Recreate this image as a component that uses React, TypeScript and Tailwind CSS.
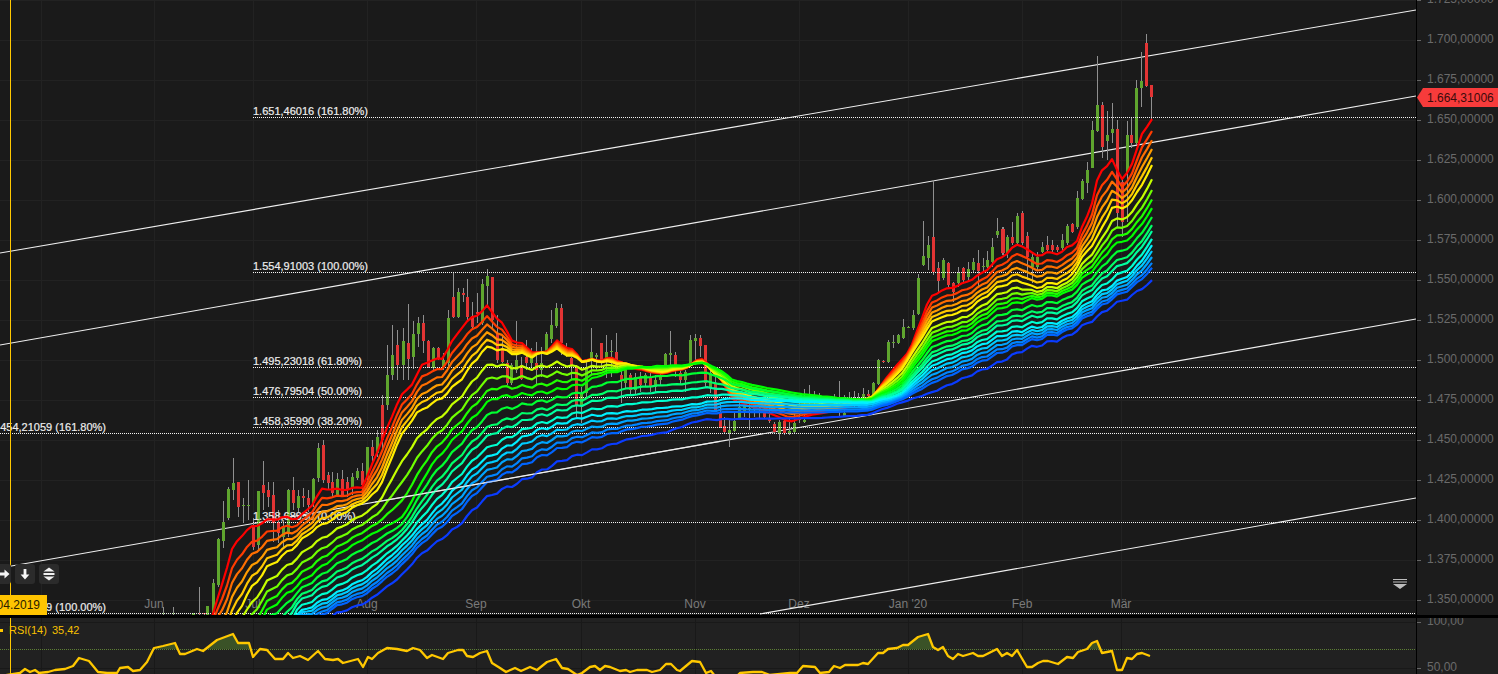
type Pt = number[];
type Candle = [number, number, number, number, number, string];

const CHART_W = 1416;

// ribbon colours, fast ema (red) to slow ema (blue)
const ribbonColors = [
  "#ff0000", "#ff3c00", "#ff6e00", "#ff9c00", "#ffc800", "#ffee00",
  "#c4ff00", "#70ff00", "#20ff00", "#00ff00", "#00ff30", "#00ff68",
  "#00ffa0", "#00ffd0", "#00f0ff", "#00ccff", "#00a4ff", "#0084ff", "#0064ff", "#0a3cff",
];

const redGuide: Pt[] = [[205,640],[213,614],[233,547],[243,533],[260,523],[277,518],[300,518],[313,503],[323,488],[340,490],[363,487],[378,450],[400,397],[413,383],[423,363],[442,358],[463,325],[487,307],[500,320],[510,338],[540,355],[557,342],[570,348],[582,360],[600,360],[613,358],[633,368],[660,374],[687,368],[700,357],[717,373],[733,400],[767,412],[790,422],[810,415],[840,410],[872,398],[887,377],[910,350],[920,323],[930,297],[943,290],[960,285],[980,275],[1000,258],[1020,243],[1033,255],[1063,252],[1077,240],[1090,210],[1098,177],[1113,157],[1120,182],[1133,163],[1142,133],[1152,120]];
const yellowGuide: Pt[] = [[225,640],[237,613],[250,590],[267,568],[293,548],[313,530],[340,515],[367,500],[380,487],[400,437],[417,413],[433,403],[443,397],[463,377],[483,350],[490,347],[513,353],[533,356],[557,350],[583,361],[600,361],[633,365],[660,372],[690,366],[700,360],[733,390],[757,398],[800,407],[840,405],[870,398],[900,372],[933,320],[967,310],[1000,286],[1020,280],[1033,288],[1067,280],[1100,233],[1113,205],[1120,210],[1133,200],[1152,166]];
const greenGuide: Pt[] = [[250,640],[265,613],[300,583],[340,553],[367,537],[403,517],[430,467],[453,440],[480,410],[493,398],[547,392],[583,384],[600,375],[633,368],[660,366],[690,365],[700,362],[717,368],[733,380],[757,386],[800,394],[840,398],[870,400],[900,385],[933,340],[967,330],[1000,308],[1020,302],[1067,293],[1100,263],[1113,245],[1120,243],[1133,236],[1152,209]];
const cyanGuide: Pt[] = [[285,640],[297,614],[367,577],[400,548],[480,462],[533,432],[583,417],[633,411],[690,405],[733,398],[757,400],[800,402],[870,403],[900,396],[933,365],[967,352],[1000,336],[1020,331],[1067,320],[1100,293],[1120,280],[1133,272],[1152,246]];
const blueGuide: Pt[] = [[320,625],[333,615],[367,602],[400,577],[420,555],[457,527],[483,500],[497,492],[520,482],[547,468],[563,460],[600,448],[633,438],[667,432],[700,420],[733,419],[820,418],[867,415],[900,403],[933,392],[1000,362],[1023,350],[1067,337],[1077,330],[1100,315],[1113,305],[1130,297],[1152,281]];

// which guides a line sits between, and how far along
const lineSlots: [Pt[], Pt[], number][] = [
  [redGuide, yellowGuide, 0], [redGuide, yellowGuide, 0.26], [redGuide, yellowGuide, 0.46],
  [redGuide, yellowGuide, 0.65], [redGuide, yellowGuide, 0.83], [redGuide, yellowGuide, 1],
  [yellowGuide, greenGuide, 0.33], [yellowGuide, greenGuide, 0.58], [yellowGuide, greenGuide, 0.8],
  [yellowGuide, greenGuide, 1], [greenGuide, cyanGuide, 0.24], [greenGuide, cyanGuide, 0.46],
  [greenGuide, cyanGuide, 0.62], [greenGuide, cyanGuide, 0.83], [greenGuide, cyanGuide, 1],
  [cyanGuide, blueGuide, 0.17], [cyanGuide, blueGuide, 0.34], [cyanGuide, blueGuide, 0.51],
  [cyanGuide, blueGuide, 0.65], [cyanGuide, blueGuide, 1],
];

function at(guide: Pt[], x: number) {
  if (x <= guide[0][0]) return guide[0][1];
  for (let i = 1; i < guide.length; i++) {
    if (x <= guide[i][0]) {
      const [x0, y0] = guide[i - 1];
      const [x1, y1] = guide[i];
      return y0 + ((y1 - y0) * (x - x0)) / (x1 - x0);
    }
  }
  return guide[guide.length - 1][1];
}

function ribbonLine(slot: [Pt[], Pt[], number]) {
  const [a, b, t] = slot;
  const pts: string[] = [];
  for (let x = 207; x <= 1152; x += 5) {
    const ya = at(a, x);
    const yb = at(b, x);
    const spread = Math.min(Math.abs(at(blueGuide, x) - at(redGuide, x)) / 90, 1);
    const wiggle = (Math.sin(x * 0.37) + 0.6 * Math.sin(x * 0.91 + 1)) * 1.1 * spread;
    pts.push(`${x},${(ya + (yb - ya) * t + wiggle).toFixed(1)}`);
  }
  return pts.join(" ");
}

// candles read off the picture: [x, high, top, bottom, low, colour]
const g = "g";
const r = "r";
const shift = (ox: number, oy: number, rows: Candle[]): Candle[] =>
  rows.map(([x, h, t, b, l, c]) => [ox + x / 3, oy + h / 3, oy + t / 3, oy + b / 3, oy + l / 3, c]);

const candles: Candle[] = [
  ...shift(0, 480, [
    [490,380,398,400,405,g],[520,380,398,400,405,g],[580,398,400,405,405,g],[598,322,400,403,405,r],[612,398,400,403,405,r],[622,378,378,405,405,g],[640,297,310,405,405,g],
  ]),
  ...shift(200, 440, [
    [55,295,297,435,440,g],[70,182,245,302,325,g],[85,140,148,235,240,g],[100,55,128,150,180,g],[115,125,125,200,230,r],[130,175,194,197,250,g],[145,120,194,197,240,g],[160,235,260,320,330,r],[175,152,152,315,330,g],[190,62,135,160,210,r],[205,125,150,172,200,r],[220,125,165,250,305,r],[235,210,245,280,310,r],[250,240,260,290,320,g],[265,148,150,280,290,g],[280,112,150,190,210,r],[295,150,168,205,215,g],[310,145,168,175,200,r],[325,150,175,195,215,r],[340,115,118,190,200,g],[355,10,25,115,125,g],[370,0,15,120,130,r],[385,97,105,130,150,r],[397,95,125,160,175,r],[412,100,118,165,170,g],[427,90,118,165,170,r],[442,110,125,150,170,r],[457,100,110,140,165,g],[472,85,93,113,120,g],[487,70,93,135,150,r],[502,22,22,115,120,g],[517,0,22,47,70,r],[532,-30,-10,40,50,g],
  ]),
  [382,395,405,440,450,r],[387,345,375,405,410,g],[392,325,355,375,380,g],[397,330,345,365,380,r],
  ...shift(400, 260, [
    [8,205,243,315,360,g],[23,132,250,297,360,r],[38,183,222,292,327,g],[53,170,190,222,260,g],[68,165,190,242,280,r],[83,240,243,320,325,r],[98,260,265,325,330,g],[113,262,265,295,300,r],[128,280,300,320,330,g],[143,150,175,310,320,g],[158,35,112,170,175,r],[173,85,97,172,175,g],[188,85,100,106,125,r],[200,57,112,170,185,r],[215,125,168,200,205,r],[230,100,155,161,190,r],[245,58,72,190,195,g],[260,28,48,77,140,g],[275,50,52,180,210,r],[290,165,220,300,310,r],[305,225,265,305,310,r],[320,300,310,370,375,r],[334,310,315,370,375,g],[349,183,300,330,340,g],[364,290,315,358,360,r],[379,240,290,310,330,r],[394,265,290,310,320,g],[409,245,310,330,375,r],[424,260,310,330,352,g],[439,215,222,280,285,g],[454,150,195,237,250,g],[469,128,145,197,205,g],[484,132,145,250,285,r],[499,250,265,285,290,g],[514,290,295,315,360,r],[529,315,320,435,470,r],[544,380,400,435,490,g],[559,300,320,400,410,g],[574,205,277,300,345,g],[588,280,285,290,330,g],[602,250,250,300,320,r],[617,225,275,300,355,g],[632,240,274,277,350,g],[647,218,275,335,340,r],[662,330,345,360,430,r],[676,320,330,370,385,g],[691,340,345,390,405,r],[706,340,352,390,405,g],[720,335,350,375,395,r],[735,340,345,370,380,g],[750,320,350,380,395,r],[765,345,360,380,395,g],[781,340,350,360,375,g],[796,280,282,320,325,g],[811,213,280,285,325,g],[826,275,285,320,350,r],[841,330,340,360,375,r],[856,330,335,360,395,g],[871,225,240,310,320,g],[886,222,235,243,310,g],[901,225,235,257,290,r],[916,255,255,370,385,r],[931,320,340,385,400,g],[946,340,370,450,455,r],[961,430,455,500,505,r],[973,470,497,515,520,r],[988,480,510,518,560,g],[1003,460,482,512,515,g],[1018,430,440,475,480,g],[1033,420,435,460,470,g],[1048,430,445,450,510,g],[1063,420,435,450,470,g],[1078,435,445,450,475,r],[1093,440,450,470,475,r],[1108,440,478,483,490,r],[1123,485,492,515,520,r],[1138,480,487,520,540,g],[1153,478,483,520,525,r],[1168,470,512,520,525,g],[1183,460,488,515,520,g],[1198,420,470,480,490,g],[1213,390,480,487,490,g],
  ]),
  ...shift(800, 180, [
    [13,628,660,665,680,g],[28,615,660,665,680,g],[43,632,660,665,680,r],[58,640,660,665,680,g],[103,642,660,665,680,g],[118,603,660,665,710,g],[133,645,700,710,712,g],[148,635,660,665,680,r],[163,632,660,665,680,g],[175,640,660,665,680,r],[190,625,642,655,660,g],[205,630,643,648,655,r],
    [220,605,608,645,655,g],[235,537,540,612,615,g],[250,540,542,545,548,r],[265,480,485,545,548,g],[280,465,485,488,505,g],[295,462,465,488,492,g],[310,418,440,473,476,g],[325,438,440,442,445,g],[340,390,405,445,450,g],[355,283,295,402,405,g],[370,124,228,255,258,g],[385,168,195,235,270,g],[400,0,172,275,285,r],[415,245,265,303,335,r],[430,235,240,295,300,g],[445,245,250,315,320,r],[460,305,310,335,365,r],[475,262,278,310,320,g],[490,260,265,300,305,r],[505,245,268,292,300,g],[520,235,245,270,275,g],[535,210,250,272,320,r],[550,235,258,262,280,g],[562,213,240,262,265,g],[577,175,202,245,260,g],[592,115,153,165,175,g],[607,142,147,220,225,r],[622,165,170,220,235,g],[637,127,170,190,195,r],[652,100,107,190,195,g],[667,95,100,190,195,r],[682,155,168,210,300,r],
  ]),
  ...shift(1000, 0, [
    [8,680,688,760,770,r],[22,705,710,760,770,g],[37,665,712,730,735,r],[52,645,647,730,735,g],[67,632,640,725,730,r],[82,695,708,770,830,r],[97,760,770,800,850,g],[112,755,770,800,810,g],[127,725,740,755,760,g],[142,707,735,750,760,r],[157,720,735,750,760,r],[172,735,742,750,755,r],[187,702,720,745,750,g],[202,672,677,730,735,g],[217,670,673,695,700,r],[232,572,595,682,688,g],[247,537,543,597,600,g],[262,487,510,548,578,g],[277,362,390,503,505,g],[292,168,316,392,395,g],[307,305,316,440,475,r],[322,333,405,422,480,g],[337,310,388,398,430,g],[350,360,388,640,680,r],[365,530,545,665,710,r],[380,363,405,515,665,g],[394,350,405,430,445,r],[409,240,265,430,435,g],[424,157,243,265,322,g],[439,102,130,257,260,r],[454,255,255,290,360,r],
  ]),
];

const rsiPoints: Pt[] = [[0,676],[20,673],[25,669],[30,672],[35,670],[39,673],[48,672],[55,670],[65,669],[73,666],[79,658],[89,661],[98,672],[107,673],[117,673],[120,668],[128,667],[133,671],[140,670],[147,662],[154,648],[163,646],[175,643],[180,654],[185,654],[197,649],[203,651],[217,640],[233,634],[238,643],[249,643],[253,657],[260,649],[267,650],[275,659],[283,659],[288,653],[293,658],[300,656],[308,660],[318,651],[325,659],[333,660],[338,659],[343,663],[358,659],[363,667],[368,657],[372,659],[378,653],[387,648],[397,649],[407,651],[413,648],[420,650],[427,658],[432,655],[443,659],[448,653],[458,650],[463,650],[467,656],[473,657],[480,653],[487,651],[492,663],[500,668],[506,672],[515,668],[521,671],[530,667],[537,670],[547,662],[556,659],[562,668],[568,669],[577,675],[582,673],[590,667],[595,666],[600,670],[605,666],[610,667],[620,671],[626,670],[630,672],[637,670],[647,670],[652,672],[660,670],[666,664],[671,664],[677,670],[680,671],[692,661],[700,662],[706,673],[711,671],[715,676],[737,676],[740,673],[753,672],[762,672],[770,675],[790,673],[797,673],[803,666],[815,667],[820,673],[829,672],[834,666],[840,668],[845,665],[858,665],[863,663],[868,664],[878,653],[883,653],[888,649],[897,648],[903,645],[908,645],[918,637],[928,634],[933,647],[938,650],[943,647],[948,656],[953,659],[958,654],[963,656],[973,653],[978,656],[983,656],[997,649],[1002,656],[1007,653],[1012,656],[1017,650],[1027,667],[1032,667],[1038,663],[1043,661],[1048,661],[1058,664],[1067,657],[1073,658],[1078,652],[1087,649],[1092,643],[1097,641],[1102,653],[1112,651],[1117,670],[1122,670],[1127,658],[1132,659],[1137,654],[1142,653],[1150,656]];

const rsiPath = rsiPoints.map(([x, y]) => `${x},${y - 618}`).join(" ");

const priceTicks = ["1.725,00000", "1.700,00000", "1.675,00000", "1.650,00000", "1.625,00000", "1.600,00000", "1.575,00000", "1.550,00000", "1.525,00000", "1.500,00000", "1.475,00000", "1.450,00000", "1.425,00000", "1.400,00000", "1.375,00000", "1.350,00000"];
const tickY = (i: number) => Math.round(-0.5 + i * 40.04);

const months: [string, number][] = [["Jun", 154], ["Jul", 253], ["Aug", 367], ["Sep", 476], ["Okt", 581], ["Nov", 695], ["Dez", 799], ["Jan '20", 908], ["Feb", 1022], ["Mär", 1121]];
const gridX = [41, 154, 253, 367, 476, 581, 695, 799, 908, 1022, 1121];

const channels = [
  [0, 253, 1416, 10],
  [0, 345, 1416, 96],
  [0, 568, 1416, 319],
  [760, 614, 1416, 498],
];

const fibs: [string, number, number][] = [
  ["1.651,46016 (161.80%)", 253, 117],
  ["1.554,91003 (100.00%)", 253, 272],
  ["1.495,23018 (61.80%)", 253, 367],
  ["1.476,79504 (50.00%)", 253, 397],
  ["1.458,35990 (38.20%)", 253, 427],
  ["1.454,21059 (161.80%)", -9, 433],
  ["1.358,68950 (0.00%)", 253, 522],
  ["1.262,14039 (100.00%)", -9, 613],
];

function PriceChart() {
  return (
    <svg width={CHART_W} height={615} className="block">
      {priceTicks.map((_, i) => (
        <rect key={i} x={0} y={tickY(i)} width={CHART_W} height={1} fill="#222222" />
      ))}
      {gridX.map((x) => (
        <rect key={x} x={x} y={0} width={1} height={615} fill="#222222" />
      ))}
      {months.map(([label, x]) => (
        <text key={label} x={x} y={608} textAnchor="middle" fontSize={12} fill="#7a7a7a">{label}</text>
      ))}
      {channels.map(([x1, y1, x2, y2]) => (
        <line key={y1} x1={x1} y1={y1} x2={x2} y2={y2} stroke="#efefef" strokeWidth={1.1} />
      ))}
      {candles.map(([x, h, t, b, l, c], i) => {
        const cx = Math.round(x);
        return (
          <g key={i} shapeRendering="crispEdges">
            <rect x={cx} y={h} width={1} height={Math.max(l - h, 1)} fill="#8f8f8f" />
            <rect x={cx - 1} y={t} width={3.4} height={Math.max(b - t, 1)} fill={c === "g" ? "#5fa52e" : "#e23434"} />
          </g>
        );
      })}
      {fibs.map(([label, x, y]) => (
        <g key={label}>
          <line x1={Math.max(x, 0)} y1={y + 0.5} x2={CHART_W} y2={y + 0.5} stroke="#f4f4f4" strokeWidth={1} strokeDasharray="1 1" shapeRendering="crispEdges" />
          <text x={x} y={y - 2} fontSize={11} fill="#ededed" stroke="#ededed" strokeWidth={0.2}>{label}</text>
        </g>
      ))}
      {lineSlots.map((slot, i) => (
        <polyline key={i} points={ribbonLine(slot)} fill="none" stroke={ribbonColors[i]} strokeWidth={2.2} strokeLinejoin="round" />
      ))}
      {/* the lower channel shows on top of the slow lines here */}
      <line x1={375} y1={502.1} x2={720} y2={441.4} stroke="#efefef" strokeOpacity={0.75} strokeWidth={1.1} />
      <rect x={10} y={0} width={1} height={615} fill="#ffc800" />
    </svg>
  );
}

function RsiChart() {
  return (
    <svg width={CHART_W} height={56} className="block">
      <defs>
        <clipPath id="over70">
          <rect x={0} y={0} width={CHART_W} height={31} />
        </clipPath>
      </defs>
      <rect x={0} y={4} width={CHART_W} height={1} fill="#191919" />
      <rect x={0} y={50} width={CHART_W} height={1} fill="#191919" />
      {gridX.map((x) => (
        <rect key={x} x={x} y={0} width={1} height={56} fill="#191919" />
      ))}
      <polygon points={`0,31 ${rsiPath} 1150,31`} fill="#3a5227" clipPath="url(#over70)" />
      <line x1={0} y1={31.5} x2={CHART_W} y2={31.5} stroke="#5d7f35" strokeWidth={1} strokeDasharray="1 1" shapeRendering="crispEdges" />
      <polyline points={rsiPath} fill="none" stroke="#ffc800" strokeWidth={2.3} strokeLinejoin="round" />
      <rect x={10} y={0} width={1} height={56} fill="#ffc800" />
    </svg>
  );
}

function AxisLabel({ y, label }: { y: number; label: string }) {
  return (
    <div className="absolute left-0 flex items-center h-[16px] gap-[6px]" style={{ top: y - 9 }}>
      <span className="w-[4px] h-px bg-[#666666] translate-y-px" />
      <span className="text-[12px] leading-none text-[#6a6a6a] whitespace-nowrap">{label}</span>
    </div>
  );
}

export default function App() {
  return (
    <div className="flex flex-col w-[1498px] h-[674px] overflow-hidden bg-black font-['Liberation_Sans',Arial,sans-serif]">
      {/* Price panel */}
      <div className="flex h-[615px] shrink-0">
        <div className="relative w-[1416px] overflow-hidden bg-[#1a1a1a]">
          <PriceChart />

          <div className="absolute left-[-9px] top-[564px] flex gap-[4px]">
            <div className="w-[20px] h-[20px] rounded-[3px] bg-[#2b2b2b] flex items-center justify-center">
              <svg className="ml-[5px]" width="12" height="10" viewBox="0 0 12 10">
                <path d="M0 3.600h6.500V0.600L11.500 5 6.500 9.400V6.400H0z" fill="#f5f5f5" />
              </svg>
            </div>
            <div className="w-[20px] h-[20px] rounded-[3px] bg-[#2b2b2b] flex items-center justify-center">
              <svg width="10" height="12" viewBox="0 0 10 12">
                <path d="M3.600 1v5.500H0.600L5 11.500 9.400 6.500H6.400V1z" fill="#f5f5f5" />
              </svg>
            </div>
            <div className="w-[20px] h-[20px] rounded-[3px] bg-[#2b2b2b] flex items-center justify-center">
              <svg width="14" height="14" viewBox="0 0 14 14">
                <path d="M7 0.500L12.500 4.500H1.500zM7 13.500L1.500 9.500H12.500zM1.500 6h11v2h-11z" fill="#f0f0f0" />
              </svg>
            </div>
          </div>

          <div className="absolute left-0 top-[595px] w-[47px] h-[20px] bg-[#ffc400] flex items-center justify-end pr-[7px]">
            <span className="text-[12px] leading-none text-[#2a2000]">04.2019</span>
          </div>

          <svg className="absolute left-[1393px] top-[579px]" width="14" height="10" viewBox="0 0 14 10">
            <path d="M0 0h14v1H0zM0 2.500h14v1H0zM0 5h14L7 10z" fill="#bdbdbd" />
          </svg>
        </div>

        <div className="relative flex-1 border-l border-black bg-[#1c1c1c] overflow-hidden">
          {priceTicks.map((label, i) => (
            <AxisLabel key={label} y={tickY(i)} label={label} />
          ))}
          <div className="absolute left-0 right-0 top-[88px] h-[19px] bg-[#f73b3b] [clip-path:polygon(0_50%,6px_0,100%_0,100%_100%,6px_100%)] flex items-center pl-[10px]">
            <span className="text-[12px] leading-none text-[#3c0b0b]">1.664,31006</span>
          </div>
        </div>
      </div>

      {/* separator */}
      <div className="h-[3px] shrink-0 bg-black" />

      {/* RSI panel */}
      <div className="flex flex-1 min-h-0">
        <div className="relative w-[1416px] overflow-hidden bg-[#212121]">
          <RsiChart />
          <div className="absolute left-0 top-[7px] flex items-center text-[11px] leading-none text-[#f7c000] whitespace-nowrap">
            <span className="w-[3px] h-[3px] bg-[#ffc800] mr-[6px]" />
            <span>RSI(14)</span>
            <span className="ml-[5px]">35,42</span>
          </div>
        </div>
        <div className="relative flex-1 border-l border-black bg-[#212121] overflow-hidden">
          <AxisLabel y={4} label="100,00" />
          <AxisLabel y={50} label="50,00" />
        </div>
      </div>
    </div>
  );
}
